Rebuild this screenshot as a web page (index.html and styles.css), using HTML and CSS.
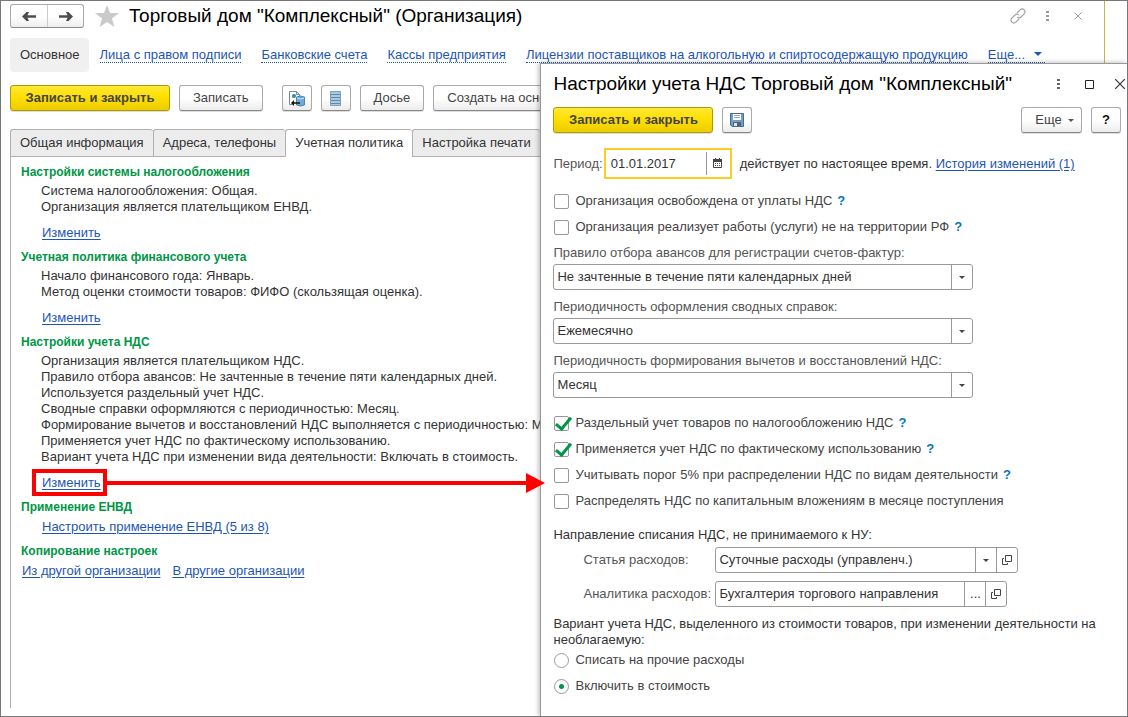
FILE: index.html
```html
<!DOCTYPE html>
<html lang="ru">
<head>
<meta charset="utf-8">
<title>Торговый дом "Комплексный" (Организация)</title>
<link rel="stylesheet" href="styles.css">
</head>
<body>
<div class="app">
  <main class="window">
    <header class="titlebar">
      <div class="nav-buttons">
        <button class="nav-btn" type="button" aria-label="Назад"><svg width="14" height="11" viewBox="0 0 14 11"><path d="M0 5.500 5 0h2.500v4.200H14v2.600H7.500V11H5z" fill="none"/><path d="M0 5.500 4.500 1h2.500L5.500 4.200H14v2.600H5.500L7 10H4.500z" fill="#4d4d4d"/></svg></button>
        <button class="nav-btn" type="button" aria-label="Вперед"><svg width="14" height="11" viewBox="0 0 14 11"><path d="M14 5.500 9.500 1H7l1.500 3.200H0v2.600h8.500L7 10h2.500z" fill="#4d4d4d"/></svg></button>
      </div>
      <svg class="star" width="24" height="22" viewBox="0 0 24 22"><path d="M12 0l3 8h9l-7 5.500 2.500 8.500L12 17l-7.500 5L7 13.500 0 8h9z" fill="#c9cacc"/></svg>
      <h1 class="title">Торговый дом "Комплексный" (Организация)</h1>
      <div class="window-tools">
        <svg width="16" height="16" viewBox="0 0 16 16" fill="none" stroke="#a3a3a3" stroke-width="1.200"><path d="M7 5l3.200-3.200a2.600 2.600 0 0 1 4 4L11 9c-1 1-2.600 1-3.600 0M9 11l-3.200 3.200a2.600 2.600 0 0 1-4-4L5 7c1-1 2.600-1 3.600 0"/></svg>
        <svg width="4" height="12" viewBox="0 0 4 12" fill="#999"><path d="M0 1h3v2H0zM0 5h3v2H0zM0 9h3v2H0z"/></svg>
        <svg class="close" width="8" height="8" viewBox="0 0 8 8" fill="none" stroke="#999"><path d="M.5.5l7 7M7.500.5l-7 7"/></svg>
      </div>
    </header>

    <nav class="sections">
      <span class="section-current">Основное</span>
      <a class="section-link" href="#signers">Лица с правом подписи</a>
      <a class="section-link" href="#banks">Банковские счета</a>
      <a class="section-link" href="#cash">Кассы предприятия</a>
      <a class="section-link" href="#licenses">Лицензии поставщиков на алкогольную и спиртосодержащую продукцию</a>
      <a class="section-link" href="#more">Еще...<svg class="more-arrow" width="8" height="5" viewBox="0 0 8 5"><path d="M0 0h8L4 4z" fill="#1d55b5"/></svg></a>
    </nav>

    <div class="toolbar">
      <button class="btn btn-primary" type="button">Записать и закрыть</button>
      <button class="btn btn-save" type="button">Записать</button>
      <button class="btn btn-icon" type="button" aria-label="Файлы"><svg width="17" height="17" viewBox="0 0 17 17"><path d="M1.500 14.500V1.500h7l3 3v5M1.500 14.500h3" fill="#fff" stroke="#7b8a96"/><path d="M8.500 1.500v3h3" fill="none" stroke="#7b8a96"/><circle cx="6" cy="6" r="2" fill="#2484c6"/><path d="M4 7l2-1 1 2H5z" fill="#4bae4f"/><path d="M8.500 7q4-2 8 0v8q-4 2-8 0z" fill="#6fa9d4" stroke="#4a84b2"/><path d="M9 8q4 2 7 0" fill="none" stroke="#cde6f5"/><path d="M3 13l3-3v2.300h6v1.400H6V16z" fill="#111"/></svg></button>
      <button class="btn btn-icon" type="button" aria-label="Список"><svg width="11" height="15" viewBox="0 0 11 15"><path d="M.5.5h10v14H.5z" fill="#a9cbe4" stroke="#7e9fb8"/><path d="M1 3.500h9M1 6.500h9M1 9.500h9M1 12.500h9" stroke="#6288a5"/></svg></button>
      <button class="btn" type="button">Досье</button>
      <button class="btn" type="button">Создать на основании</button>
    </div>

    <div class="tabs" role="tablist">
      <button class="tab" type="button" role="tab">Общая информация</button>
      <button class="tab" type="button" role="tab">Адреса, телефоны</button>
      <button class="tab tab-active" type="button" role="tab" aria-selected="true">Учетная политика</button>
      <button class="tab" type="button" role="tab">Настройка печати</button>
      <span class="tabs-rest"></span>
    </div>

    <div class="panel">
      <section class="group">
        <h2 class="group-title">Настройки системы налогообложения</h2>
        <p class="group-text">Система налогообложения: Общая.<br>Организация является плательщиком ЕНВД.</p>
        <a class="link group-link" href="#tax">Изменить</a>
      </section>
      <section class="group">
        <h2 class="group-title">Учетная политика финансового учета</h2>
        <p class="group-text">Начало финансового года: Январь.<br>Метод оценки стоимости товаров: ФИФО (скользящая оценка).</p>
        <a class="link group-link" href="#policy">Изменить</a>
      </section>
      <section class="group">
        <h2 class="group-title">Настройки учета НДС</h2>
        <p class="group-text">Организация является плательщиком НДС.<br>Правило отбора авансов: Не зачтенные в течение пяти календарных дней.<br>Используется раздельный учет НДС.<br>Сводные справки оформляются с периодичностью: Месяц.<br>Формирование вычетов и восстановлений НДС выполняется с периодичностью: Месяц.<br>Применяется учет НДС по фактическому использованию.<br>Вариант учета НДС при изменении вида деятельности: Включать в стоимость.</p>
        <div class="group-link marked">
          <a class="link" href="#vat">Изменить</a>
          <span class="mark-box"><span class="arrow"><span class="arrow-line"></span><span class="arrow-head"></span></span></span>
        </div>
      </section>
      <section class="group">
        <h2 class="group-title">Применение ЕНВД</h2>
        <a class="link group-link group-link-near" href="#envd">Настроить применение ЕНВД (5 из 8)</a>
      </section>
      <section class="group">
        <h2 class="group-title">Копирование настроек</h2>
        <div class="copy-links"><a class="link" href="#from">Из другой организации</a><a class="link" href="#to">В другие организации</a></div>
      </section>
    </div>
  </main>

  <form class="dialog" role="dialog" aria-labelledby="dialog-title">
    <header class="dialog-head">
      <h2 class="title" id="dialog-title">Настройки учета НДС Торговый дом "Комплексный"</h2>
      <div class="dialog-tools">
        <svg width="4" height="12" viewBox="0 0 4 12" fill="#666"><path d="M0 1h3v2H0zM0 5h3v2H0zM0 9h3v2H0z"/></svg>
        <svg width="9" height="9" viewBox="0 0 9 9" fill="none" stroke="#222"><path d="M.5.5h8v8h-8z"/></svg>
        <svg class="close" width="10" height="10" viewBox="0 0 10 10" fill="none" stroke="#333" stroke-width="1.200"><path d="M0 0l10 10M10 0L0 10"/></svg>
      </div>
    </header>

    <div class="dialog-bar">
      <button class="btn btn-primary" type="button">Записать и закрыть</button>
      <button class="btn btn-icon" type="button" aria-label="Записать"><svg width="14" height="14" viewBox="0 0 14 14"><path d="M.5.5h13v13H2L.5 12z" fill="#6f9fcd" stroke="#456c92"/><path d="M3 1h8v6H3z" fill="#fff"/><path d="M4 2.500h6M4 4.500h6" stroke="#9aabba"/><path d="M3 9h8v4H3z" fill="#54636f"/><path d="M4 10h3v3H4z" fill="#dce3e8"/></svg></button>
      <span class="spacer"></span>
      <button class="btn btn-more" type="button">Еще<svg width="6" height="3" viewBox="0 0 6 3"><path d="M0 0h6L3 3z" fill="#555"/></svg></button>
      <button class="btn btn-icon btn-help" type="button">?</button>
    </div>

    <div class="period">
      <label class="label" for="period">Период:</label>
      <span class="date">
        <input class="date-input" id="period" type="text" value="01.01.2017">
        <button class="date-btn" type="button" aria-label="Выбрать дату"><svg width="9" height="10" viewBox="0 0 9 10"><path d="M.5 2.500h8v7h-8z" fill="#fff" stroke="#444"/><path d="M0 1h9v3H0zM2 0h1v2H2zM6 0h1v2H6z" fill="#444"/><path d="M2 5h1v1H2zM4 5h1v1H4zM6 5h1v1H6zM2 7h1v1H2zM4 7h1v1H4zM6 7h1v1H6z" fill="#444"/></svg></button>
      </span>
      <span class="period-note">действует по настоящее время. <a class="link" href="#history">История изменений (1)</a></span>
    </div>

    <div class="checks">
      <label class="check"><input class="box" type="checkbox">Организация освобождена от уплаты НДС <a class="hint" href="#h1">?</a></label>
      <label class="check"><input class="box" type="checkbox">Организация реализует работы (услуги) не на территории РФ <a class="hint" href="#h2">?</a></label>
    </div>

    <div class="fields">
      <div class="field">
        <label class="label" for="rule">Правило отбора авансов для регистрации счетов-фактур:</label>
        <span class="combo"><select class="combo-value" id="rule"><option>Не зачтенные в течение пяти календарных дней</option></select><span class="combo-cell"><i class="caret"></i></span></span>
      </div>
      <div class="field">
        <label class="label" for="summary">Периодичность оформления сводных справок:</label>
        <span class="combo"><select class="combo-value" id="summary"><option>Ежемесячно</option></select><span class="combo-cell"><i class="caret"></i></span></span>
      </div>
      <div class="field">
        <label class="label" for="deduct">Периодичность формирования вычетов и восстановлений НДС:</label>
        <span class="combo"><select class="combo-value" id="deduct"><option>Месяц</option></select><span class="combo-cell"><i class="caret"></i></span></span>
      </div>
    </div>

    <div class="checks checks-lower">
      <label class="check"><input class="box" type="checkbox" checked>Раздельный учет товаров по налогообложению НДС <a class="hint" href="#h3">?</a></label>
      <label class="check"><input class="box" type="checkbox" checked>Применяется учет НДС по фактическому использованию <a class="hint" href="#h4">?</a></label>
      <label class="check"><input class="box" type="checkbox">Учитывать порог 5% при распределении НДС по видам деятельности <a class="hint" href="#h5">?</a></label>
      <label class="check"><input class="box" type="checkbox">Распределять НДС по капитальным вложениям в месяце поступления</label>
    </div>

    <div class="writeoff">
      <p class="text">Направление списания НДС, не принимаемого к НУ:</p>
      <div class="writeoff-grid">
        <label class="label" for="item">Статья расходов:</label>
        <span class="combo combo-item"><select class="combo-value" id="item"><option>Суточные расходы (управленч.)</option></select><span class="combo-cell"><i class="caret"></i></span><button class="combo-cell" type="button" aria-label="Открыть"><svg width="10" height="10" viewBox="0 0 10 10" fill="none" stroke="#444"><path d="M3.500.5h6v6h-6zM2 3.500H.5v6h5V8"/></svg></button></span>
        <label class="label" for="analytics">Аналитика расходов:</label>
        <span class="combo combo-analytics"><input class="combo-value" id="analytics" type="text" value="Бухгалтерия торгового направления"><button class="combo-cell" type="button" aria-label="Выбрать">...</button><button class="combo-cell" type="button" aria-label="Открыть"><svg width="10" height="10" viewBox="0 0 10 10" fill="none" stroke="#444"><path d="M3.500.5h6v6h-6zM2 3.500H.5v6h5V8"/></svg></button></span>
      </div>
    </div>

    <fieldset class="variant">
      <legend class="text">Вариант учета НДС, выделенного из стоимости товаров, при изменении деятельности на необлагаемую:</legend>
      <label class="check"><input class="radio" type="radio" name="variant">Списать на прочие расходы</label>
      <label class="check"><input class="radio" type="radio" name="variant" checked>Включить в стоимость</label>
    </fieldset>
  </form>
</div>
</body>
</html>
```

FILE: styles.css
```css
* { box-sizing: border-box; }

body {
  margin: 0;
  background: #fff;
  color: #333;
  font: 13px/16px "Liberation Sans", Arial, sans-serif;
}

button, input, select { font: inherit; color: inherit; }
h1, h2, p { margin: 0; }
svg { display: block; flex: none; }

.app {
  position: relative;
  min-height: 100vh;
  border: 1px solid #77777a;
  overflow: hidden;
  display: flex;
}

.window {
  flex: 1;
  min-width: 0;
  padding: 3px 0 8px 9px;
  display: flex;
  flex-direction: column;
  margin-right: 22px;
  border-right: 1px solid #c4b450;
  white-space: nowrap;
}

.titlebar { display: flex; align-items: center; height: 24px; }

.nav-buttons {
  display: flex;
  height: 24px;
  border: 1px solid #aaa;
  border-bottom-color: #888;
  border-radius: 3px;
  background: linear-gradient(#fff 50%, #eee);
}
.nav-btn {
  width: 36px;
  padding: 0;
  border: 0;
  background: none;
  display: flex;
  align-items: center;
  justify-content: center;
}
.nav-btn + .nav-btn { border-left: 1px solid #ccc; }
.star { margin: 0 10px 0 11px; }
.title { font-size: 19px; line-height: 24px; font-weight: 400; color: #000; }
.window-tools { margin-left: auto; padding-right: 22px; display: flex; align-items: center; gap: 20px; }
.window-tools .close { margin-left: 4px; }

.sections { display: flex; align-items: center; margin-top: 10px; }
.section-current {
  padding: 9px 9px 9px 10px;
  margin-right: 11px;
  border-radius: 4px;
  background: #f0f0f0;
}
.section-link {
  margin-right: 20px;
  line-height: 14px;
  color: #1d55b5;
  text-decoration: none;
  border-bottom: 1px dotted #1d55b5;
  display: flex;
  align-items: center;
}
.more-arrow { margin: 0 3px 0 9px; }

.toolbar { display: flex; gap: 9px; margin-top: 13px; }
.btn {
  height: 26px;
  padding: 0 13px;
  border: 1px solid #aaa;
  border-bottom-color: #888;
  border-radius: 3px;
  background: linear-gradient(#fff 50%, #ececec);
  color: #444;
  display: flex;
  align-items: center;
  justify-content: center;
  box-shadow: 0 1px 0 #ddd;
}
.btn-primary {
  width: 160px;
  border-color: #b09a00;
  background: linear-gradient(#ffe838, #ffe000 45%, #ebcd00);
  font-weight: 700;
  padding: 0;
}
.btn-save { margin-right: 10px; }
.btn-icon { width: 30px; padding: 0; }
.btn-help { font-weight: 700; color: #111; }
.btn-more { width: 61px; gap: 6px; padding: 0 0 0 6px; }

.tabs { display: flex; height: 28px; margin-top: 18px; }
.tab {
  padding: 0 9px;
  border: 1px solid #b0b0b0;
  border-right-width: 0;
  background: #ececec;
  border-radius: 3px 3px 0 0;
}
.tab-active { background: #fff; border-bottom-color: #fff; }
.tabs-rest { flex: 1; border: solid #b0b0b0; border-width: 0 0 1px 1px; }

.panel {
  flex: 1;
  border-left: 1px solid #b0b0b0;
  padding: 7px 0 0 10px;
  display: flex;
  flex-direction: column;
  gap: 8px;
}
.group { display: flex; flex-direction: column; align-items: flex-start; }
.group-title { font-size: 12px; line-height: 16px; color: #009646; }
.group-text { margin: 3px 0 10px 20px; }
.link { color: #1d55b5; text-decoration: underline; text-underline-offset: 2px; }
.group-link { margin-left: 21px; }
.group-link-near { margin-top: 4px; }
.copy-links { display: flex; gap: 12px; margin: 4px 0 0 1px; }

/* Callout: frame round the link and an arrow that ends at the dialog */
.marked { position: relative; }
.mark-box {
  position: absolute;
  inset: -6px -6px -5px -10px;
  border: 4px solid red;
  z-index: 3;
  pointer-events: none;
}
.arrow {
  position: absolute;
  left: 100%;
  top: 50%;
  width: calc(48vw - 99px);
  height: 20px;
  margin-top: -10px;
  display: flex;
  align-items: center;
}
.arrow-line { flex: 1; height: 4px; background: red; }
.arrow-head { border: solid transparent; border-width: 10px 0 10px 19px; border-left-color: red; }

.dialog {
  position: absolute;
  z-index: 2;
  top: 62px;
  left: calc(48% - 1px);
  right: 0;
  bottom: 0;
  padding: 8px 6px 0 12px;
  border: solid #999;
  border-width: 1px 0 0 1px;
  background: #fff;
  box-shadow: -1px 0 5px rgba(0, 0, 0, .3);
}
.dialog-head { display: flex; align-items: center; height: 24px; white-space: nowrap; }
.dialog-tools { margin-left: auto; display: flex; align-items: center; gap: 24px; margin-right: -4px; }
.dialog-tools .close { margin-left: -3px; }
.dialog-bar { display: flex; gap: 9px; margin-top: 11px; }
.spacer { flex: 1; }

.label { color: #555; }
.period { display: flex; align-items: center; margin-top: 15px; white-space: nowrap; }
.date {
  display: flex;
  width: 128px;
  height: 31px;
  margin: 0 8px 0 1px;
  padding: 2px 0;
  border: 2px solid #fc2;
}
.date-input { flex: 1; min-width: 0; border: 0; padding: 0 5px; outline: 0; background: none; }
.date-btn {
  width: 24px;
  padding: 0 0 0 6px;
  border: 0;
  border-left: 1px solid #999;
  background: none;
  display: flex;
  align-items: center;
}
.date-btn svg { margin-bottom: 2px; }

.checks { display: flex; flex-direction: column; gap: 10px; margin-top: 14px; }
.check { display: flex; align-items: center; height: 16px; color: #444; white-space: nowrap; }
.hint { margin-left: 5px; color: #0078c0; font-weight: 700; text-decoration: none; }
.box, .radio {
  appearance: none;
  flex: none;
  width: 15px;
  height: 15px;
  margin: 0 6px 0 1px;
  border: 1px solid #999;
  border-radius: 2px;
  background: #fff;
}
.box { position: relative; }
.box:checked::after {
  content: "";
  position: absolute;
  left: 4px;
  top: -3px;
  width: 6px;
  height: 13px;
  border: solid #009646;
  border-width: 0 3px 3px 0;
  transform: rotate(40deg);
}
.radio { border-radius: 50%; }
.radio:checked { background: radial-gradient(circle, #009646 2px, #fff 3px); }

.fields { display: flex; flex-direction: column; gap: 9px; max-width: 420px; margin-top: 10px; }
.field { display: flex; flex-direction: column; gap: 3px; }
.combo {
  display: flex;
  height: 26px;
  border: 1px solid #999;
  border-radius: 3px;
  background: #fff;
}
.combo-value {
  appearance: none;
  flex: 1;
  min-width: 0;
  padding: 0 3px;
  border: 0;
  background: none;
  outline: 0;
}
.combo-cell {
  width: 21px;
  padding: 0;
  border: 0;
  border-left: 1px solid #999;
  background: none;
  display: flex;
  align-items: center;
  justify-content: center;
}
.caret { border: solid transparent; border-width: 3px 3px 0; border-top-color: #444; }

.checks-lower { margin-top: 17px; }
.writeoff { margin-top: 18px; }
.writeoff-grid {
  display: grid;
  grid-template-columns: 132px 1fr;
  row-gap: 8px;
  align-items: center;
  margin: 4px 0 0 30px;
}
.combo-item { max-width: 303px; }
.combo-analytics { max-width: 292px; }

.variant { margin: 9px 0 0; padding: 0; border: 0; display: flex; flex-direction: column; gap: 10px; }
.variant legend { padding: 0; margin-bottom: 4px; }
```
